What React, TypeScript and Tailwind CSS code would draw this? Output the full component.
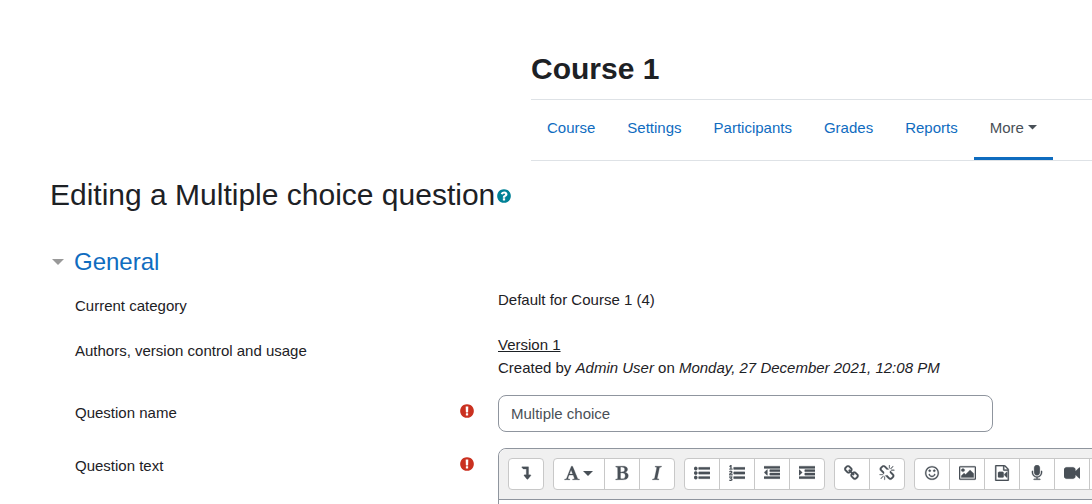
import React from "react";

const paths = {
  bold: "M747 1521q74 32 140 32 376 0 376-335 0-114-41-180-27-44-61.5-74t-67.5-46.5-80.5-25-84-10.5-94.5-2q-73 0-101 10 0 53-.5 159t-.5 158q0 8-1 67.5t-.5 96.5 4.5 83.5 12 66.5zm-14-746q42 7 109 7 82 0 143-13t110-44.5 74.5-89.5 25.5-142q0-70-29-122.5t-79-82-108-43.5-124-14q-50 0-130 13 0 50 4 151t4 152q0 27-.5 80t-.5 79q0 46 1 69zm-541 889l2-94q15-4 85-16t106-27q7-12 12.5-27t8.5-33.5 5.5-32.5 3-37.5.5-34v-65.5q0-982-22-1025-4-8-22-14.5t-44.5-11-49.5-7-48.5-4.5-30.5-3l-4-83q98-2 340-11.5t373-9.5q23 0 68 .5t68 .5q70 0 136.5 13t128.5 42 108 71 74 104.5 28 137.5q0 52-16.5 95.5t-39 72-64.5 57.5-73 45-84 40q154 35 256.5 134t102.5 248q0 100-35 179.5t-93.5 130.5-138 85.5-163.5 48.5-176 14q-44 0-132-3t-132-3q-106 0-307 11t-231 12z",
  italic: "M384 1662l17-85q6-2 81.5-21.5t111.5-37.5q28-35 41-101 1-7 62-289t114-543.5 52-296.5v-25q-24-13-54.5-18.5t-69.5-8-58-5.5l19-103q33 2 120 6.5t149.5 7 120.5 2.5q48 0 98.5-2.5t121-7 98.5-6.5q-5 39-19 89-30 10-101.5 28.5t-108.5 33.5q-8 19-14 42.5t-9 40-7.5 45.5-6.5 42q-27 148-87.5 419.5t-77.5 355.5q-2 9-13 58t-20 90-16 83.5-6 57.5l1 18q17 4 185 31-3 44-16 99-11 0-32.5 1.5t-32.5 1.5q-29 0-87-10t-86-10q-138-2-206-2-51 0-143 9t-121 11z",
  font: "M789 559l-170 450q33 0 136.5 2t160.5 2q19 0 57-2-87-253-184-452zm-725 1105l2-79q23-7 56-12.5t57-10.5 49.5-14.5 44.5-29 31-50.5l237-616 280-724h128q8 14 11 21l205 480q33 78 106 257.5t114 274.5q15 34 58 144.5t72 168.5q20 45 35 57 19 15 88 29.5t84 20.5q6 38 6 57 0 5-.5 13.5t-.5 12.5q-63 0-190-8t-191-8q-76 0-215 7t-178 8q0-43 4-78l131-28q1 0 12.5-2.5t15.5-3.5 14.5-4.5 15-6.5 11-8 9-11 2.5-14q0-16-31-96.5t-72-177.5-42-100l-450-2q-26 58-76.5 195.5t-50.5 162.5q0 22 14 37.5t43.5 24.5 48.5 13.5 57 8.5 41 4q1 19 1 58 0 9-2 27-58 0-174.5-10t-174.5-10q-8 0-26.5 4t-21.5 4q-80 14-188 14z",
  levelDown: "M480 200h672q14 0 23 9t9 23v864h192q40 0 58 37 17 37-9 68l-320 384q-18 22-49 22t-49-22l-320-384q-26-31-9-68 18-37 58-37h192v-640h-320q-14 0-25-11l-160-192q-14-16-4-34 8-19 29-19z",
  listUl: "M384 1408q0 80-56 136t-136 56-136-56-56-136 56-136 136-56 136 56 56 136zm0-512q0 80-56 136t-136 56-136-56-56-136 56-136 136-56 136 56 56 136zm0-512q0 80-56 136t-136 56-136-56-56-136 56-136 136-56 136 56 56 136zM544 1280h1216l32 32v192l-32 32h-1216l-32-32v-192zM544 768h1216l32 32v192l-32 32h-1216l-32-32v-192zM544 256h1216l32 32v192l-32 32h-1216l-32-32v-192z",
  listOl: "M381 1620q0 80-54.5 126t-135.5 46q-106 0-172-66l57-88q49 45 106 45 29 0 50.5-14.5t21.5-42.5q0-64-105-56l-26-56q8-10 32.5-43.5t42.5-54 37-38.5v-1q-16 0-48.5 1t-48.5 1v53h-106v-152h333v88l-95 115q51 12 81 49t30 88zm2-627v159h-362q-6-36-6-54 0-51 23.5-93t56.5-68 66-47.5 56.5-43.5 23.5-45q0-25-14.5-38.5t-39.5-13.5q-46 0-81 58l-85-59q24-51 71.5-79.5t105.5-28.5q73 0 123 41.5t50 112.5q0 50-34 91.5t-75 64.5-75.5 50.5-35.5 52.5h127v-60h105zM384 413v99h-335v-99h107q0-41 .5-121.5t.5-121.5v-12h-2q-8 17-50 54l-71-76 136-127h106v404h108zM544 1280h1216l32 32v192l-32 32h-1216l-32-32v-192zM544 768h1216l32 32v192l-32 32h-1216l-32-32v-192zM544 256h1216l32 32v192l-32 32h-1216l-32-32v-192z",
  outdent: "M384 544v576q0 13-9.5 22.5t-22.5 9.5q-14 0-23-9l-288-288q-9-9-9-23t9-23l288-288q9-9 23-9 13 0 22.5 9.5t9.5 22.5zM32 1280h1728l32 32v192l-32 32h-1728l-32-32v-192zM672 896h1088l32 32v192l-32 32h-1088l-32-32v-192zM672 512h1088l32 32v192l-32 32h-1088l-32-32v-192zM32 128h1728l32 32v192l-32 32h-1728l-32-32v-192z",
  indent: "M352 832q0 14-9 23l-288 288q-9 9-23 9-13 0-22.5-9.5t-9.5-22.5v-576q0-13 9.5-22.5t22.5-9.5q14 0 23 9l288 288q9 9 9 23zM32 1280h1728l32 32v192l-32 32h-1728l-32-32v-192zM672 896h1088l32 32v192l-32 32h-1088l-32-32v-192zM672 512h1088l32 32v192l-32 32h-1088l-32-32v-192zM32 128h1728l32 32v192l-32 32h-1728l-32-32v-192z",
  link: "M1456 1216q0-40-28-68l-208-208q-28-28-68-28-42 0-72 32 3 3 19 18.500t21.500 21.500 15 19 13 25.500 3.500 27.500q0 40-28 68t-68 28q-15 0-27.500-3.500t-25.500-13-19-15-21.500-21.500-18.500-19q-33 31-33 73 0 40 28 68l206 207q27 27 68 27 40 0 68-26l147-146q28-28 28-67zm-703-705q0-40-28-68l-206-207q-28-28-68-28-39 0-68 27l-147 146q-28 28-28 67 0 40 28 68l208 208q27 27 68 27 42 0 72-31-3-3-19-18.500t-21.500-21.500-15-19-13-25.500-3.500-27.500q0-40 28-68t68-28q15 0 27.500 3.500t25.500 13 19 15 21.500 21.500 18.500 19q33-31 33-73zm895 705q0 120-85 203l-147 146q-83 83-203 83-121 0-204-85l-206-207q-83-83-83-203 0-123 88-209l-88-88q-86 88-208 88-120 0-204-84l-208-208q-84-84-84-204t85-203l147-146q83-83 203-83 121 0 204 85l206 207q83 83 83 203 0 123-88 209l88 88q86-88 208-88 120 0 204 84l208 208q84 84 84 204z",
  unlink: "M503 1271l-256 256q-10 9-23 9-12 0-23-9-9-10-9-23t9-23l256-256q10-9 23-9t23 9q9 10 9 23t-9 23zm169 41v320q0 14-9 23t-23 9-23-9-9-23v-320q0-14 9-23t23-9 23 9 9 23zm-224-224q0 14-9 23t-23 9h-320q-14 0-23-9t-9-23 9-23 23-9h320q14 0 23 9t9 23zm1264 128q0 120-85 203l-147 146q-83 83-203 83-121 0-204-85l-334-335q-21-21-42-56l239-18 273 274q28 28 68 27.5t68-27.5l147-146q28-28 28-67 0-40-28-68l-274-275 18-239q35 21 56 42l336 336q84 86 84 204zm-617-724l-239 18-273-274q-28-28-68-28-39 0-68 27l-147 146q-28 28-28 67 0 40 28 68l274 274-18 240q-35-21-56-42l-336-336q-84-86-84-204 0-120 85-203l147-146q83-83 203-83 121 0 204 85l334 335q21 21 42 56zm633 84q0 14-9 23t-23 9h-320q-14 0-23-9t-9-23 9-23 23-9h320q14 0 23 9t9 23zm-544-544v320q0 14-9 23t-23 9-23-9-9-23v-320q0-14 9-23t23-9 23 9 9 23zm407 151l-256 256q-11 9-23 9t-23-9q-9-10-9-23t9-23l256-256q10-9 23-9t23 9q9 10 9 23t-9 23z",
  smile: "M1262 1075q-37 121-138 195t-228 74-228-74-138-195q-8-25 4-48.5t38-31.5q25-8 48.5 4t31.5 38q25 80 92.5 129.5t151.5 49.5 151.5-49.5 92.5-129.5q8-26 32-38t49-4 37 31.5 4 48.5zm-494-435q0 53-37.5 90.5t-90.5 37.5-90.5-37.5-37.5-90.5 37.5-90.5 90.5-37.5 90.5 37.5 37.5 90.5zm512 0q0 53-37.5 90.5t-90.5 37.5-90.5-37.5-37.5-90.5 37.5-90.5 90.5-37.5 90.5 37.5 37.5 90.5zm256 256q0-130-51-248.5t-136.5-204-204-136.5-248.5-51-248.5 51-204 136.5-136.5 204-51 248.5 51 248.5 136.5 204 204 136.5 248.5 51 248.5-51 204-136.5 136.5-204 51-248.5zm128 0q0 209-103 385.5t-279.5 279.5-385.5 103-385.5-103-279.5-279.5-103-385.5 103-385.5 279.5-279.5 385.5-103 385.5 103 279.5 279.5 103 385.5z",
  image: "M576 576q0 80-56 136t-136 56-136-56-56-136 56-136 136-56 136 56 56 136zm1024 384v448h-1408v-192l320-320 160 160 512-512zm96-704h-1600q-13 0-22.5 9.5t-9.5 22.5v1216q0 13 9.5 22.5t22.5 9.5h1600q13 0 22.5-9.5t9.5-22.5v-1216q0-13-9.5-22.5t-22.5-9.5zm160 32v1216q0 66-47 113t-113 47h-1600q-66 0-113-47t-47-113v-1216q0-66 47-113t113-47h1600q66 0 113 47t47 113z",
  fileVideo: "M1596 380q28 28 48 76t20 88v1152q0 40-28 68t-68 28h-1344q-40 0-68-28t-28-68v-1600q0-40 28-68t68-28h896q40 0 88 20t76 48zm-444-244v376h376q-10-29-22-41l-313-313q-12-12-41-22zm384 1528v-1024h-416q-40 0-68-28t-28-68v-416h-768v1536h1280zm-576-896q52 0 90 38t38 90v384q0 52-38 90t-90 38h-384q-52 0-90-38t-38-90v-384q0-52 38-90t90-38h384zm492 2q20 8 20 30v576q0 22-20 30-8 2-12 2-14 0-23-9l-265-266v-90l265-266q9-9 23-9 4 0 12 2z",
  microphone: "M1472 704v128q0 221-147.5 384.5t-364.5 187.5v132h256q26 0 45 19t19 45-19 45-45 19h-640q-26 0-45-19t-19-45 19-45 45-19h256v-132q-217-24-364.5-187.5t-147.5-384.5v-128q0-26 19-45t45-19 45 19 19 45v128q0 185 131.5 316.5t316.5 131.5 316.5-131.5 131.5-316.5v-128q0-26 19-45t45-19 45 19 19 45zm-256-384v512q0 132-94 226t-226 94-226-94-94-226v-512q0-132 94-226t226-94 226 94 94 226z",
  video: "M1792 352v1088q0 42-39 59-13 5-25 5-27 0-45-19l-403-403v166q0 119-84.5 203.5t-203.5 84.5h-704q-119 0-203.5-84.5t-84.5-203.5v-704q0-119 84.5-203.5t203.5-84.5h704q119 0 203.5 84.5t84.5 203.5v165l403-402q18-19 45-19 12 0 25 5 39 17 39 59z",
  file: "M256 0h900l508 508v1284h-1408zM384 128v1536h1152v-1024h-512v-512z",
  question: "M1024 1376v-192q0-14-9-23t-23-9h-192q-14 0-23 9t-9 23v192q0 14 9 23t23 9h192q14 0 23-9t9-23zm256-672q0-88-55.5-163t-138.5-116-170-41q-243 0-371 213-15 24 8 42l132 100q7 6 19 6 16 0 25-12 53-68 86-92 34-24 86-24 48 0 85.5 26t37.5 59q0 38-20 61t-68 45q-63 28-115.5 86.5t-52.5 125.5v36q0 14 9 23t23 9h192q14 0 23-9t9-23q0-19 21.5-49.5t54.5-49.5q32-18 49-28.5t46-35 44.5-48 28-60.5 12.5-81zm384 192q0 209-103 385.5t-279.5 279.5-385.5 103-385.5-103-279.5-279.5-103-385.5 103-385.5 279.5-279.5 385.5-103 385.5 103 279.5 279.5 103 385.5z",
  exclamation: "M896 128q209 0 385.5 103t279.5 279.5 103 385.5-103 385.5-279.5 279.5-385.5 103-385.5-103-279.5-279.5-103-385.5 103-385.5 279.5-279.5 385.5-103zm128 1247v-190q0-14-9-23.5t-22-9.5h-192q-13 0-23 10t-10 23v190q0 13 10 23t23 10h192q13 0 22-9.5t9-23.5zm-2-344l18-621q0-12-10-18-10-8-24-8h-220q-14 0-24 8-10 6-10 18l17 621q0 10 10 17.5t24 7.5h185q14 0 23.5-7.5t10.5-17.5z",
};

type IconName = keyof typeof paths;

function Icon({ name }: { name: IconName }) {
  const wide = name === "image";
  return (
    <svg
      viewBox={wide ? "-64 0 1920 1792" : "0 0 1792 1792"}
      fill="currentColor"
      stroke="currentColor"
      strokeWidth={name === "question" || name === "exclamation" ? 0 : 30}
      fillRule={name === "file" ? "evenodd" : "nonzero"}
      aria-hidden="true"
      className={`${wide ? "w-[17px]" : "w-4"} h-4 shrink-0`}
    >
      <path d={paths[name]} />
    </svg>
  );
}

const navLinks = ["Course", "Settings", "Participants", "Grades", "Reports"];

const toolGroups: { icon: IconName; label: string }[][] = [
  [{ icon: "levelDown", label: "Show more buttons" }],
  [
    { icon: "font", label: "Paragraph styles" },
    { icon: "bold", label: "Bold" },
    { icon: "italic", label: "Italic" },
  ],
  [
    { icon: "listUl", label: "Unordered list" },
    { icon: "listOl", label: "Ordered list" },
    { icon: "outdent", label: "Outdent" },
    { icon: "indent", label: "Indent" },
  ],
  [
    { icon: "link", label: "Link" },
    { icon: "unlink", label: "Unlink" },
  ],
  [
    { icon: "smile", label: "Emoji picker" },
    { icon: "image", label: "Insert image" },
    { icon: "fileVideo", label: "Insert media" },
    { icon: "microphone", label: "Record audio" },
    { icon: "video", label: "Record video" },
    { icon: "file", label: "Manage files" },
  ],
];

function Row({
  label,
  htmlFor,
  required = false,
  children,
}: {
  label: string;
  htmlFor?: string;
  required?: boolean;
  children: React.ReactNode;
}) {
  return (
    <div className="flex items-start">
      <div className="flex w-[423px] shrink-0 items-start justify-between pt-1.5 pr-[23px]">
        {htmlFor ? <label htmlFor={htmlFor}>{label}</label> : <span>{label}</span>}
        {required && (
          <span role="img" aria-label="Required" className="pt-0.5 text-[#ca3120]">
            <Icon name="exclamation" />
          </span>
        )}
      </div>
      <div className="min-w-0 flex-1">{children}</div>
    </div>
  );
}

export default function App() {
  return (
    <div className="min-h-screen overflow-hidden bg-white font-['Liberation_Sans',Arial,sans-serif] text-[15px] leading-[23px] text-[#1d2125]">
      <header className="ml-[531px] pt-[51px]">
        <h1 className="pb-3 text-[30px] leading-9 font-bold">Course 1</h1>
        <nav className="flex border-y border-[#dee2e6]">
          {navLinks.map((link) => (
            <a
              key={link}
              href="#"
              className="flex h-[60px] items-center border-b-[3px] border-transparent px-4 pb-0.5 text-[#0f6cbf]"
            >
              {link}
            </a>
          ))}
          <button
            type="button"
            className="flex h-[60px] items-center gap-1 border-b-[3px] border-[#0f6cbf] px-4 pb-0.5 text-[#495057]"
          >
            More
            <svg viewBox="0 0 9 5" aria-hidden="true" className="h-[5px] w-[9px] fill-current">
              <path d="M0 0h9L4.500 4.500z" />
            </svg>
          </button>
        </nav>
      </header>

      <main className="pt-4 pl-[50px]">
        <div className="flex items-center gap-px">
          <h2 className="text-[30px] leading-9">Editing a Multiple choice question</h2>
          <button type="button" aria-label="Help" className="pt-0.5 text-[#008196]">
            <Icon name="question" />
          </button>
        </div>

        <h3 className="pt-[34px] text-[24px] leading-[29px] text-[#0f6cbf]">
          <button type="button" className="flex items-center gap-[10px] pl-0.5">
            <svg viewBox="0 0 12 6" aria-hidden="true" className="h-1.5 w-3 fill-[#999999]">
              <path d="M0 0h12L6 6z" />
            </svg>
            General
          </button>
        </h3>

        <form className="flex flex-col gap-4 pt-3 pl-[25px]">
          <Row label="Current category">Default for Course 1 (4)</Row>
          <Row label="Authors, version control and usage">
            <a href="#" className="underline">
              Version 1
            </a>
            <p>
              Created by <em>Admin User</em> on <em>Monday, 27 December 2021, 12:08 PM</em>
            </p>
          </Row>
          <Row label="Question name" htmlFor="question-name" required>
            <input
              id="question-name"
              type="text"
              defaultValue="Multiple choice"
              className="block h-[37px] w-[495px] max-w-full rounded-lg border border-[#8f959e] bg-white px-3 text-[#495057]"
            />
          </Row>
          <Row label="Question text" htmlFor="question-text" required>
            <div className="w-max min-w-full rounded-lg border border-[#8f959e]">
              <div
                role="toolbar"
                aria-label="Text formatting"
                className="flex gap-[9px] rounded-t-lg border-b border-[#8f959e] bg-[#f0f0f0] p-[9px]"
              >
                {toolGroups.map((group) => (
                  <div
                    key={group[0].icon}
                    className="flex h-8 shrink-0 divide-x divide-[#c8c8c8] rounded border border-[#c8c8c8] bg-white text-[#495057]"
                  >
                    {group.map((tool) => (
                      <button
                        key={tool.icon}
                        type="button"
                        aria-label={tool.label}
                        className={`flex items-center justify-center gap-[3px] pb-0.5 ${
                          tool.icon === "font" ? "w-[51px] pr-0.5" : "w-[35px] last:w-[34px]"
                        }`}
                      >
                        <Icon name={tool.icon} />
                        {tool.icon === "font" && (
                          <svg viewBox="0 0 10 5" aria-hidden="true" className="h-[5px] w-2.5 fill-current">
                            <path d="M0 0h10L5 5z" />
                          </svg>
                        )}
                      </button>
                    ))}
                  </div>
                ))}
              </div>
              <textarea id="question-text" className="block h-40 w-full resize-none rounded-b-lg bg-white p-3" />
            </div>
          </Row>
        </form>
      </main>
    </div>
  );
}
